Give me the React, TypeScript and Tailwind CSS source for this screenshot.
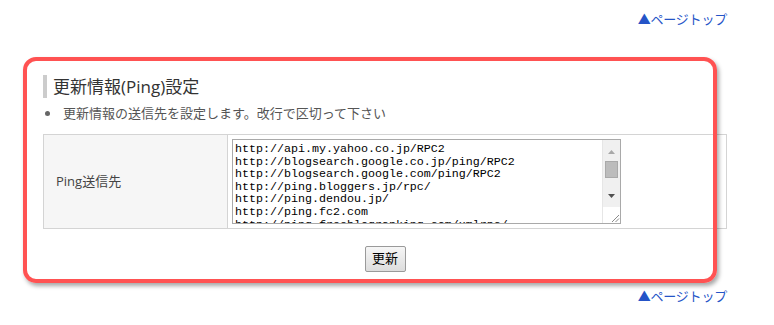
import React from 'react';

const pingUrls = [
  'http://api.my.yahoo.co.jp/RPC2',
  'http://blogsearch.google.co.jp/ping/RPC2',
  'http://blogsearch.google.com/ping/RPC2',
  'http://ping.bloggers.jp/rpc/',
  'http://ping.dendou.jp/',
  'http://ping.fc2.com',
  'http://ping.freeblogranking.com/xmlrpc/',
  'http://ping.rss.drecom.jp/',
];

const jp = "font-['Open_Sans','Noto_Sans_CJK_JP',sans-serif]";

function PageTop() {
  return (
    <div className="flex justify-end">
      <a href="#top" className={`${jp} text-[13px] leading-[18px] text-[#2554c7] tracking-[-0.2px]`}>
        ▲ページトップ
      </a>
    </div>
  );
}

function FakeScrollbar() {
  return (
    <div className="flex flex-col w-[18px] shrink-0">
      <div className="flex flex-col items-center flex-1 bg-[#f0f0f0] border-l border-[#e6e6e6]">
        <svg width="9" height="17" viewBox="0 0 9 17" className="mt-[4px]">
          <path d="M1 10 L4.5 6 L8 10 Z" fill="#a8a8a8" />
        </svg>
        <div className="w-[13px] h-[17px] bg-[#bcbcbc] border border-[#a9a9a9]" />
        <div className="flex-1" />
        <svg width="9" height="17" viewBox="0 0 9 17" className="mb-[3px]">
          <path d="M1 7 L4.5 11 L8 7 Z" fill="#505050" />
        </svg>
      </div>
      <div className="h-[16px] bg-white border-l border-[#e6e6e6] flex items-end justify-end">
        <svg width="10" height="10" viewBox="0 0 10 10">
          <path d="M2 9 L9 2 M5.5 9 L9 5.5" stroke="#8a8a8a" strokeWidth="1" />
        </svg>
      </div>
    </div>
  );
}

export default function App() {
  return (
    <div className="relative w-[774px] h-[325px] bg-white overflow-hidden">
      <div className="flex flex-col w-[727px] pl-[43px] pt-[10px]">
        <PageTop />

        <h2 className={`${jp} mt-[47px] border-l-[4px] border-[#cccccc] pl-[6px] text-[17px] leading-[23px] text-[#333333] font-normal`}>
          更新情報(Ping)設定
        </h2>

        <div className={`${jp} mt-[6px] flex items-center text-[13px] leading-[18px] text-[#555555]`}>
          <span className="ml-[2px] w-[5px] h-[5px] rounded-full bg-[#666666]" />
          <span className="ml-[13px]">更新情報の送信先を設定します。改行で区切って下さい</span>
        </div>

        <div className="mt-[12px] flex border border-[#d4d4d4]">
          <div className={`${jp} w-[184px] shrink-0 flex items-center bg-[#f6f6f6] border-r border-[#d4d4d4] pl-[12px] text-[13px] text-[#444444]`}>
            Ping送信先
          </div>
          <div className="flex-1 py-[4px] pl-[4px]">
            <div className="flex w-[389px] h-[85px] border border-[#a9a9a9] bg-white">
              <div className="flex-1 overflow-hidden pl-[2px] pt-[3px] font-['Liberation_Mono',monospace] text-[11.67px] leading-[12.6px] text-black whitespace-pre">
                {pingUrls.join('\n')}
              </div>
              <FakeScrollbar />
            </div>
          </div>
        </div>

        <div className="mt-[17px] flex justify-center">
          <button className={`${jp} w-[41px] h-[26px] border border-[#9a9a9a] rounded-[2px] bg-gradient-to-b from-[#f6f6f6] to-[#dddddd] text-[13px] text-black`}>
            更新
          </button>
        </div>

        <div className="mt-[15px]">
          <PageTop />
        </div>
      </div>

      <div className="absolute left-[23px] top-[57px] w-[694px] h-[226px] border-[4px] border-[#ff5252] rounded-[13px] shadow-[2px_3px_4px_rgba(0,0,0,0.35)] pointer-events-none" />
    </div>
  );
}
